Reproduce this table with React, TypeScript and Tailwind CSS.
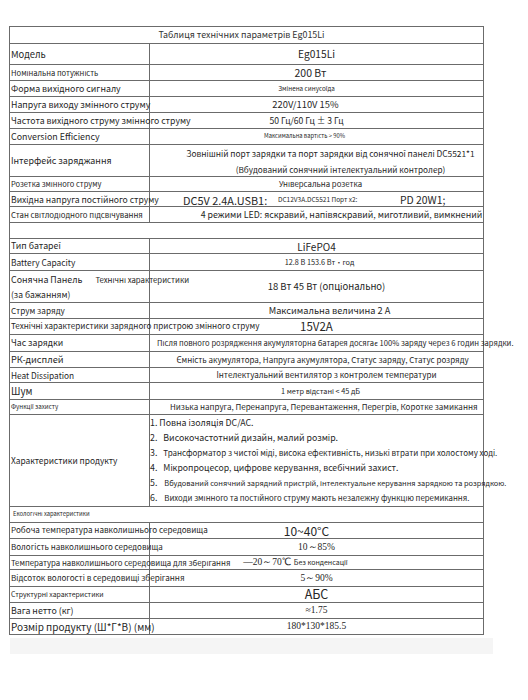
import type { ReactNode } from 'react';

interface RowProps {
  h: string;
  label: ReactNode;
  labelClass?: string;
  valueClass?: string;
  children?: ReactNode;
}

// one table row: fixed label column + value column
function Row({ h, label, labelClass = '', valueClass = '', children }: RowProps) {
  return (
    <div className={`flex border-t border-[#6b6b6b] ${h}`}>
      <div className={`w-[140px] shrink-0 border-r border-[#6b6b6b] flex items-center whitespace-nowrap pl-px ${labelClass}`}>
        {label}
      </div>
      <div className={`flex-1 flex items-center whitespace-nowrap ${valueClass || 'justify-center'}`}>
        {children}
      </div>
    </div>
  );
}

function FullRow({ h, children, className = '' }: { h: string; children?: ReactNode; className?: string }) {
  return <div className={`flex items-center border-t border-[#6b6b6b] whitespace-nowrap ${h} ${className}`}>{children}</div>;
}

const serif = "font-['Liberation_Serif','Times_New_Roman',serif]";

const features = [
  { n: '1.', text: 'Повна ізоляція DC/AC.', size: 'text-[8.8px]', gap: 'ml-[2px]' },
  { n: '2.', text: 'Високочастотний дизайн, малий розмір.', size: 'text-[8.8px]', gap: 'ml-[6px]' },
  { n: '3.', text: 'Трансформатор з чистої міді, висока ефективність, низькі втрати при холостому ході.', size: 'text-[8px]', gap: 'ml-[6px]' },
  { n: '4.', text: 'Мікропроцесор, цифрове керування, всебічний захист.', size: 'text-[8.7px]', gap: 'ml-[6px]' },
  { n: '5.', text: 'Вбудований сонячний зарядний пристрій, інтелектуальне керування зарядкою та розрядкою.', size: 'text-[7.4px]', gap: 'ml-[7px]' },
  { n: '6.', text: 'Виходи змінного та постійного струму мають незалежну функцію перемикання.', size: 'text-[7.8px]', gap: 'ml-[7px]' },
];

export default function App() {
  return (
    <div className="min-h-[700px] bg-white pt-[26px] font-['Noto_Sans_CJK_SC','Noto_Sans',sans-serif] text-[#262626]">
      <div className="ml-[9px] w-[475px] border-x border-b border-[#6b6b6b]">
        {/* title */}
        <FullRow h="h-[17px]" className="justify-center text-[8.9px] text-[#333] pr-[10px]">
          Таблиця технічних параметрів Eg015Li
        </FullRow>

        <Row h="h-[21px]" label="Модель" labelClass="text-[9.4px]">
          <span className="text-[10.2px]">Eg015Li</span>
        </Row>
        <Row h="h-[16px]" label="Номінальна потужність" labelClass="text-[7.6px]" valueClass="justify-center pr-[12px]">
          <span className="text-[10.5px]">200 Вт</span>
        </Row>
        <Row h="h-[16px]" label="Форма вихідного сигналу" labelClass="text-[8.8px]" valueClass="justify-center pr-[20px]">
          <span className="text-[6.3px]">Змінена синусоїда</span>
        </Row>
        <Row h="h-[16px]" label="Напруга виходу змінного струму" labelClass="text-[8.8px]" valueClass="justify-center pr-[22px]">
          <span className="text-[9.4px]">220V/110V 15%</span>
        </Row>
        <Row h="h-[16px]" label="Частота вихідного струму змінного струму" labelClass="text-[8.7px]" valueClass="justify-center pr-[20px]">
          <span className="text-[8.6px]">50 Гц/60 Гц ± 3 Гц</span>
        </Row>
        <Row h="h-[16px]" label="Conversion Efficiency" labelClass="text-[8.9px]" valueClass="justify-center pr-[24px]">
          <span className="text-[5.8px]">Максимальна вартість &gt; 90%</span>
        </Row>
        <Row h="h-[32px]" label="Інтерфейс заряджання" labelClass="text-[8.9px]" valueClass="flex-col justify-center pl-[28px]">
          <span className="text-[8.4px] leading-[16px]">Зовнішній порт зарядки та порт зарядки від сонячної панелі DC5521*1</span>
          <span className="text-[8.2px] leading-[16px] pl-[20px]">(Вбудований сонячний інтелектуальний контролер)</span>
        </Row>
        <Row h="h-[15px]" label="Розетка змінного струму" labelClass="text-[7.5px] pl-[3px]" valueClass="justify-center pl-[8px]">
          <span className="text-[7.8px]">Універсальна розетка</span>
        </Row>
        <Row h="h-[15px]" label="Вихідна напруга постійного струму" labelClass="text-[8.6px]" valueClass="grid grid-cols-[95px_122px_auto] items-center pl-[33px]">
          <span className="text-[10.9px]">DC5V 2.4A.USB1:</span>
          <span className="text-[6.5px]">DC12V3A.DC5521 Порт x2:</span>
          <span className="text-[10.4px]">PD 20W1;</span>
        </Row>
        <Row h="h-[16px]" label="Стан світлодіодного підсвічування" labelClass="text-[7.8px] pl-[3px]" valueClass="justify-center pl-[50px]">
          <span className="text-[8.8px]">4 режими LED: яскравий, напівяскравий, миготливий, вимкнений</span>
        </Row>

        {/* spacer row */}
        <FullRow h="h-[16px]" />

        <Row h="h-[15px]" label="Тип батареї" labelClass="text-[8.8px]">
          <span className="text-[10px]">LiFePO4</span>
        </Row>
        <Row h="h-[17px]" label="Battery Capacity" labelClass="text-[8.4px]" valueClass="justify-center pl-[6px]">
          <span className="text-[7.3px]">12.8 В 153.6 Вт・год</span>
        </Row>
        <Row
          h="h-[32px]"
          label={
            <div className="flex flex-col">
              <div className="flex items-center leading-[14px]">
                <span className="text-[8.9px]">Сонячна Панель</span>
                <span className="ml-[13px] text-[7.8px]">Технічні характеристики</span>
              </div>
              <span className="text-[8.5px] leading-[14px]">(за бажанням)</span>
            </div>
          }
          valueClass="justify-center pl-[20px]"
        >
          <span className="text-[9.5px]">18 Вт 45 Вт (опціонально)</span>
        </Row>
        <Row h="h-[16px]" label="Струм заряду" labelClass="text-[8.2px] pl-[3px]" valueClass="justify-center pl-[26px]">
          <span className="text-[9.2px]">Максимальна величина 2 А</span>
        </Row>
        <Row h="h-[16px]" label="Технічні характеристики зарядного пристрою змінного струму" labelClass="text-[8.1px]">
          <span className="text-[11.5px]">15V2A</span>
        </Row>
        <Row h="h-[17px]" label="Час зарядки" labelClass="text-[8.7px]" valueClass="justify-start pl-[7px]">
          <span className="text-[7.6px]">Після повного розрядження акумуляторна батарея досягає 100% заряду через 6 годин зарядки.</span>
        </Row>
        <Row h="h-[16px]" label="РК-дисплей" labelClass="text-[9.2px]" valueClass="justify-center pl-[12px]">
          <span className="text-[8px]">Ємність акумулятора, Напруга акумулятора, Статус заряду, Статус розряду</span>
        </Row>
        <Row h="h-[15px]" label="Heat Dissipation" labelClass="text-[8.3px]" valueClass="justify-center pl-[20px]">
          <span className="text-[8.1px]">Інтелектуальний вентилятор з контролем температури</span>
        </Row>
        <Row h="h-[17px]" label="Шум" labelClass="text-[9.8px]" valueClass="justify-center pl-[8px]">
          <span className="text-[7.3px]">1 метр відстані &lt; 45 дБ</span>
        </Row>
        <Row h="h-[15px]" label="Функції захисту" labelClass="text-[6.2px] pl-[3px]" valueClass="justify-start pl-[20px]">
          <span className="text-[8px]">Низька напруга, Перенапруга, Перевантаження, Перегрів, Коротке замикання</span>
        </Row>
        <Row h="h-[92px]" label="Характеристики продукту" labelClass="text-[8.4px]" valueClass="flex-col items-start justify-center">
          {features.map((f) => (
            <div key={f.n} className="flex h-[15px] items-center">
              <span className="text-[8.8px]">{f.n}</span>
              <span className={`${f.gap} ${f.size}`}>{f.text}</span>
            </div>
          ))}
        </Row>

        <FullRow h="h-[16px]" className="pl-[3px] text-[5.8px]">
          Екологічні характеристики
        </FullRow>
        <Row h="h-[16px]" label="Робоча температура навколишнього середовища" labelClass="text-[8.1px]" valueClass="justify-center pr-[20px]">
          <span className="text-[12px]">10~40°C</span>
        </Row>
        <Row h="h-[17px]" label="Вологість навколишнього середовища" labelClass="text-[8px]">
          <span className={`${serif} text-[9.5px]`}>10～85%</span>
        </Row>
        <Row h="h-[14px]" label="Температура навколишнього середовища для зберігання" labelClass="text-[7.8px]" valueClass="justify-center pr-[42px]">
          <span className={`${serif} text-[9.5px]`}>—20～70℃</span>
          <span className="ml-[3px] text-[7px]">Без конденсації</span>
        </Row>
        <Row h="h-[17px]" label="Відсоток вологості в середовищі зберігання" labelClass="text-[8.1px]">
          <span className={`${serif} text-[9.5px]`}>5～90%</span>
        </Row>
        <Row h="h-[16px]" label="Структурні характеристики" labelClass="text-[6.9px] pl-[3px]">
          <span className="text-[12.5px]">АБС</span>
        </Row>
        <Row h="h-[16px]" label="Вага нетто (кг)" labelClass="text-[8.8px]">
          <span className={`${serif} text-[9.5px]`}>≈1.75</span>
        </Row>
        <Row h="h-[16px]" label="Розмір продукту (Ш*Г*В) (мм)" labelClass="text-[10px]">
          <span className={`${serif} text-[9.5px]`}>180*130*185.5</span>
        </Row>
      </div>

      {/* faint strip under the table */}
      <div className="ml-[10px] mt-[3px] h-[16px] w-[483px] bg-[#f5f5f5]" />
    </div>
  );
}
